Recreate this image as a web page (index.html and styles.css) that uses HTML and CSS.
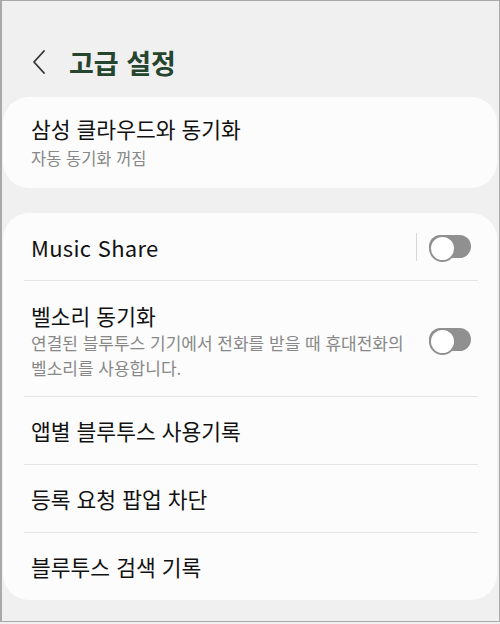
FILE: index.html
```html
<!DOCTYPE html>
<html lang="ko">

<head>
    <meta charset="UTF-8">
    <meta name="viewport" content="width=device-width, initial-scale=1.0">
    <title>고급 설정</title>
    <link rel="stylesheet" href="styles.css">
</head>

<body>
    <div class="screen">
        <header class="topbar">
            <span class="back">
                <svg width="14" height="24" viewBox="0 0 14 24">
                    <path d="M12 1 L2 12 L12 23" fill="none" stroke="#333" stroke-width="1.8" stroke-linecap="round" stroke-linejoin="round"/>
                </svg>
            </span>
            <h1>고급 설정</h1>
        </header>

        <section class="card card-sync">
            <div class="item-title">삼성 클라우드와 동기화</div>
            <div class="item-sub">자동 동기화 꺼짐</div>
        </section>

        <section class="card card-list">
            <div class="row row-music">
                <div class="row-text">
                    <div class="item-title latin">Music Share</div>
                </div>
                <span class="vline"></span>
                <span class="toggle"></span>
            </div>
            <div class="row row-bell">
                <div class="row-text">
                    <div class="item-title">벨소리 동기화</div>
                    <div class="item-sub">연결된 블루투스 기기에서 전화를 받을 때 휴대전화의 벨소리를 사용합니다.</div>
                </div>
                <span class="toggle"></span>
            </div>
            <div class="row">
                <div class="item-title">앱별 블루투스 사용기록</div>
            </div>
            <div class="row">
                <div class="item-title">등록 요청 팝업 차단</div>
            </div>
            <div class="row row-last">
                <div class="item-title">블루투스 검색 기록</div>
            </div>
        </section>
    </div>
</body>

</html>
```

FILE: styles.css
```css
/* General */
* {
    box-sizing: border-box;
}

body {
    margin: 0;
    background-color: #f0f0f0;
    font-family: "Noto Sans CJK KR", "Noto Sans", sans-serif;
    color: #111;
}

.screen {
    width: 500px;
    height: 622px;
    border: 1px solid #a9a9a9;
    border-left-width: 2px;
    background-color: #f0f0f0;
    overflow: hidden;
}

/* Header */
.topbar {
    height: 96px;
    display: flex;
    align-items: center;
    padding: 26px 0 0 30px;
}

.back {
    display: flex;
    width: 37px;
}

.topbar h1 {
    margin: 0;
    font-size: 27px;
    font-weight: bold;
    color: #26452f;
}

/* Cards */
.card {
    background-color: #fcfcfc;
    border-radius: 26px;
    margin: 0 2px 0 1px;
}

.card-sync {
    height: 91px;
    padding: 18px 0 0 28px;
}

.card-list {
    margin-top: 25px;
    height: 387px;
    padding: 0 19px 0 21px;
}

.item-title {
    font-size: 21.5px;
    line-height: 28px;
    color: #111;
}

.item-title.latin {
    font-size: 22px;
    letter-spacing: 0.3px;
}

.item-sub {
    font-size: 17px;
    line-height: 25px;
    color: #888;
    word-break: keep-all;
}

.card-sync .item-sub {
    font-size: 16.5px;
    margin-top: 3px;
}

/* Rows */
.row {
    display: flex;
    align-items: center;
    height: 68px;
    padding-left: 7px;
    border-bottom: 1.5px solid #e4e4e4;
}

.row-bell {
    height: 116px;
    padding-top: 4px;
}

.row-last {
    border-bottom: none;
    height: 67px;
}

.row-text {
    flex: 1;
}

.row-bell .item-sub {
    padding-right: 20px;
}

.vline {
    width: 1px;
    height: 28px;
    background-color: #d8d8d8;
    margin-right: 12px;
}

/* Toggle */
.toggle {
    position: relative;
    width: 42px;
    height: 23px;
    border-radius: 12px;
    background-color: #909090;
    margin-right: 7px;
    flex-shrink: 0;
}

.row-bell .toggle {
    margin-bottom: 2px;
}

.toggle::after {
    content: "";
    position: absolute;
    left: 0;
    top: 0;
    width: 23px;
    height: 23px;
    border-radius: 50%;
    border: 2.5px solid #909090;
    background-color: #fff;
}
```
